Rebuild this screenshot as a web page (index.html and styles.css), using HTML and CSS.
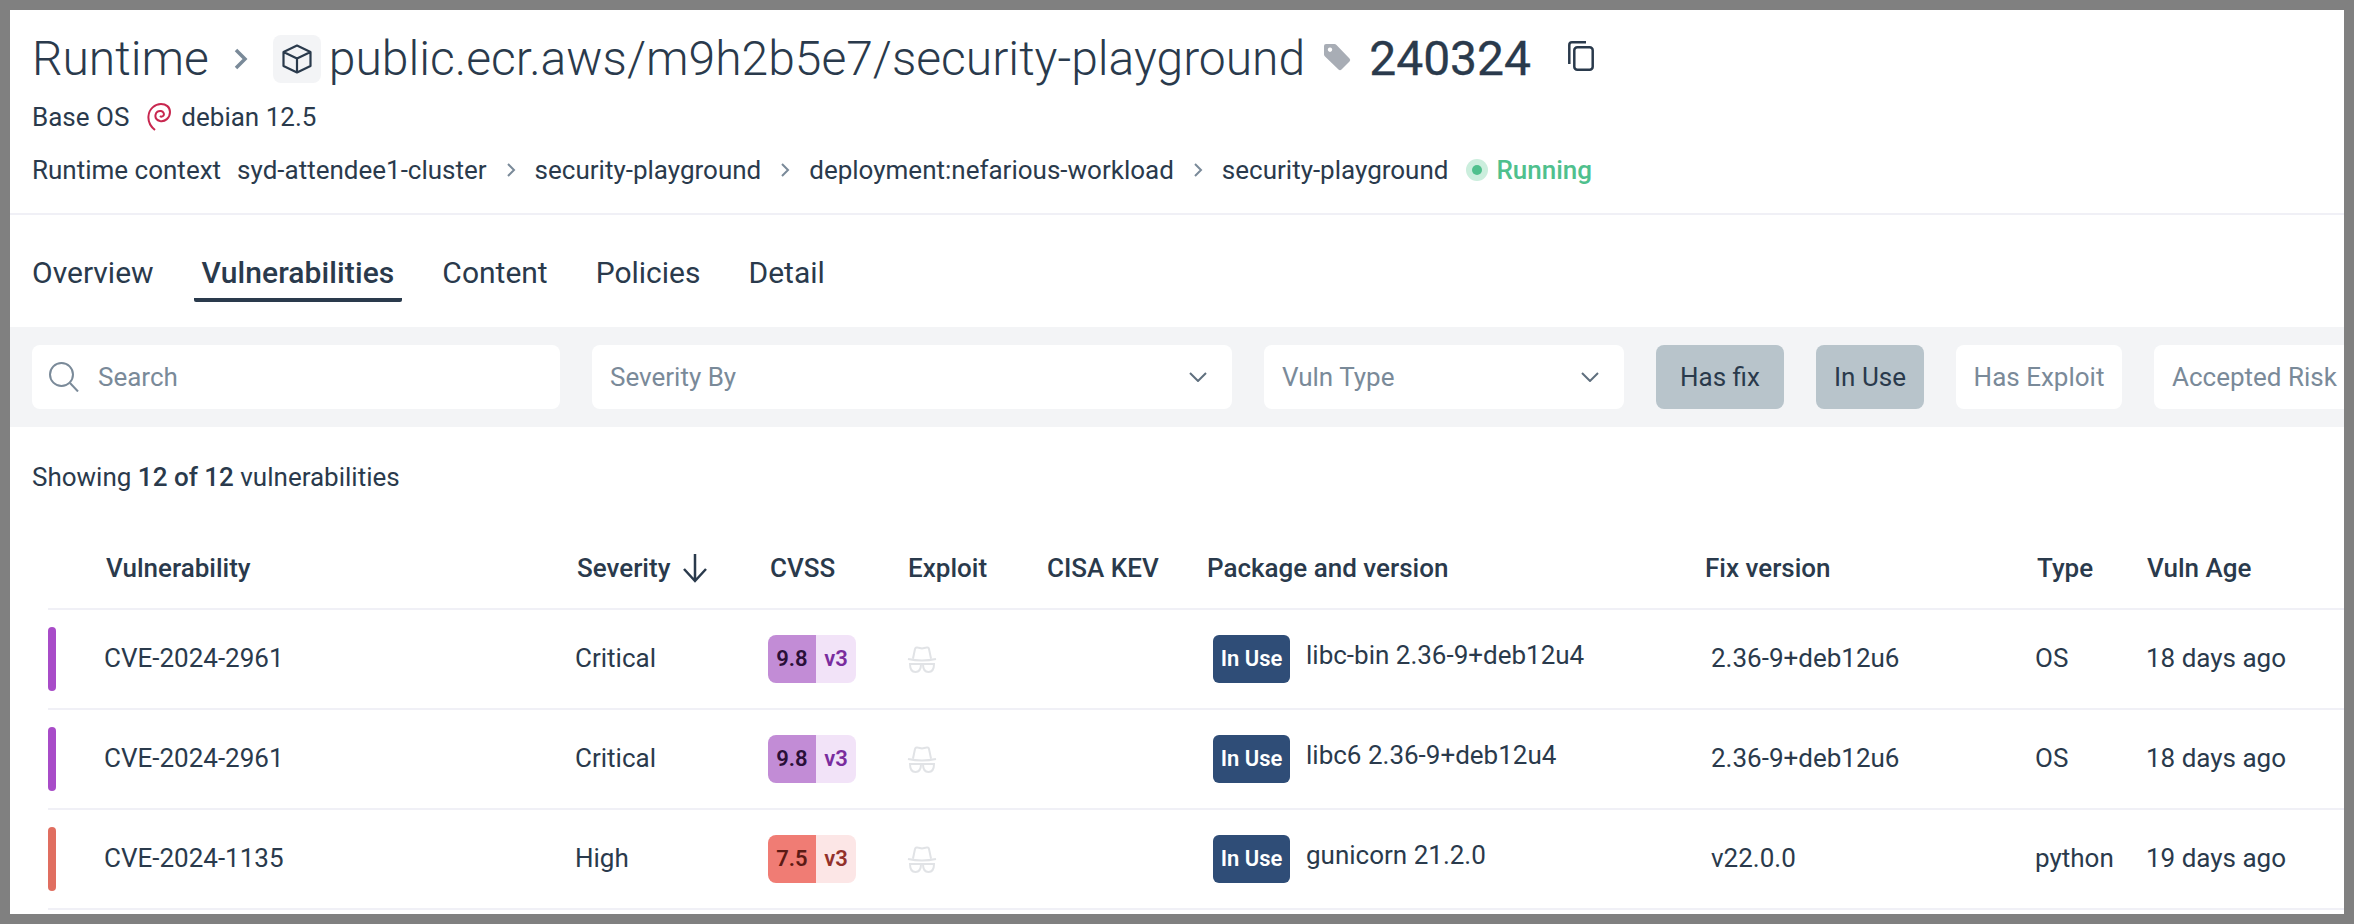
FILE: index.html
```html
<!DOCTYPE html>
<html lang="en">
<head>
<meta charset="utf-8">
<title>Runtime - security-playground</title>
<link rel="stylesheet" href="styles.css">
</head>
<body>
<main class="frame">
  <header class="head">
    <div class="title-row">
      <span class="title">Runtime</span>
      <svg class="title-chevron" viewBox="0 0 16 24"><path d="M3 3l9 9-9 9"/></svg>
      <span class="cube-box"><svg class="cube" viewBox="0 0 30 30"><path d="M15 1.500L28.500 8v14L15 28.500 1.500 22V8zM1.500 8L15 14.500 28.500 8M15 14.500v14"/></svg></span>
      <span class="title image-name">public.ecr.aws/m9h2b5e7/security-playground</span>
      <svg class="tag" viewBox="0 0 28 28"><path fill-rule="evenodd" d="M3 1h8.500q1 0 2 1l13 13.500q1.500 1.500 0 3l-8 8q-1.500 1.500-3 0L2 13.500q-1-1-1-2V3q0-2 2-2zM7 4.500a2.200 2.200 0 1 0 .01 0z"/></svg>
      <span class="tag-name">240324</span>
      <svg class="copy" viewBox="0 0 26 30"><path d="M1.300 23V4q0-2.700 2.700-2.700h14"/><rect x="6.300" y="6.300" width="18.400" height="22.400" rx="3"/></svg>
    </div>
    <div class="os-row">
      <span>Base OS</span>
      <svg class="debian" viewBox="0 0 24 28"><path d="M8 27C3 23 1 18 1.500 13 2 6 8 1 14 1c5 0 9 3 9 8 0 6-5 10-10 9-3-.8-5-3-4.500-6 .5-3 3-4.500 5.500-4 2.500.5 3.500 3 2.500 4.500-.8 1.300-2.500 1.500-3.500.5"/></svg>
      <span class="debian-name">debian 12.5</span>
    </div>
    <div class="context-row">
      <span class="context-label">Runtime context</span>
      <span>syd-attendee1-cluster</span>
      <svg class="crumb" viewBox="0 0 10 16"><path d="M2 2l6 6-6 6"/></svg>
      <span>security-playground</span>
      <svg class="crumb" viewBox="0 0 10 16"><path d="M2 2l6 6-6 6"/></svg>
      <span>deployment:nefarious-workload</span>
      <svg class="crumb" viewBox="0 0 10 16"><path d="M2 2l6 6-6 6"/></svg>
      <span>security-playground</span>
      <span class="status"><span class="status-dot"></span>Running</span>
    </div>
  </header>

  <nav class="tabs">
    <a class="tab">Overview</a>
    <a class="tab tab-active">Vulnerabilities</a>
    <a class="tab">Content</a>
    <a class="tab">Policies</a>
    <a class="tab">Detail</a>
  </nav>

  <section class="filters">
    <div class="field field-search">
      <svg class="search-icon" viewBox="0 0 30 30"><circle cx="12.500" cy="12.500" r="11.500"/><path d="M21 21l8 8.500"/></svg>
      <span>Search</span>
    </div>
    <div class="field field-severity"><span>Severity By</span><svg class="select-chevron" viewBox="0 0 18 10"><path d="M1 1l8 8 8-8"/></svg></div>
    <div class="field field-type"><span>Vuln Type</span><svg class="select-chevron" viewBox="0 0 18 10"><path d="M1 1l8 8 8-8"/></svg></div>
    <div class="toggle toggle-on toggle-fix">Has fix</div>
    <div class="toggle toggle-on toggle-use">In Use</div>
    <div class="toggle toggle-exploit">Has Exploit</div>
    <div class="toggle">Accepted Risk</div>
  </section>

  <p class="count">Showing <strong>12 of 12</strong> vulnerabilities</p>

  <section class="table">
    <div class="row row-head">
      <span></span>
      <span class="h h-2">Vulnerability</span>
      <span class="h h-2 sev-head">Severity <svg class="sort" viewBox="0 0 26 30"><path d="M13 1v27M2 16l11 12 11-12"/></svg></span>
      <span class="h h-2">CVSS</span>
      <span class="h h-1">Exploit</span>
      <span class="h">CISA KEV</span>
      <span class="h">Package and version</span>
      <span class="h">Fix version</span>
      <span class="h h-2">Type</span>
      <span class="h h-1">Vuln Age</span>
    </div>

    <div class="row">
      <span class="sev-bar sev-critical"></span>
      <span class="cell">CVE-2024-2961</span>
      <span class="cell">Critical</span>
      <span class="cvss cvss-critical"><b>9.8</b><i>v3</i></span>
      <svg class="hat" viewBox="0 0 30 27"><path d="M6 12.500L8 3q.5-2 2.500-1.500L15 2.500l4.500-1Q21.500 1 22 3l2 9.500M1 13q14 3 28 0M3 18h11c0 5-2 8-5.500 8S3 23 3 18zM16 18h11c0 5-2 8-5.500 8S16 23 16 18zM14 18.500q1-1 2 0"/></svg>
      <span></span>
      <span class="pkg"><span class="in-use">In Use</span><span class="pkg-name">libc-bin 2.36-9+deb12u4</span></span>
      <span class="cell fix">2.36-9+deb12u6</span>
      <span class="cell">OS</span>
      <span class="cell">18 days ago</span>
    </div>

    <div class="row">
      <span class="sev-bar sev-critical"></span>
      <span class="cell">CVE-2024-2961</span>
      <span class="cell">Critical</span>
      <span class="cvss cvss-critical"><b>9.8</b><i>v3</i></span>
      <svg class="hat" viewBox="0 0 30 27"><path d="M6 12.500L8 3q.5-2 2.500-1.500L15 2.500l4.500-1Q21.500 1 22 3l2 9.500M1 13q14 3 28 0M3 18h11c0 5-2 8-5.500 8S3 23 3 18zM16 18h11c0 5-2 8-5.500 8S16 23 16 18zM14 18.500q1-1 2 0"/></svg>
      <span></span>
      <span class="pkg"><span class="in-use">In Use</span><span class="pkg-name">libc6 2.36-9+deb12u4</span></span>
      <span class="cell fix">2.36-9+deb12u6</span>
      <span class="cell">OS</span>
      <span class="cell">18 days ago</span>
    </div>

    <div class="row">
      <span class="sev-bar sev-high"></span>
      <span class="cell">CVE-2024-1135</span>
      <span class="cell">High</span>
      <span class="cvss cvss-high"><b>7.5</b><i>v3</i></span>
      <svg class="hat" viewBox="0 0 30 27"><path d="M6 12.500L8 3q.5-2 2.500-1.500L15 2.500l4.500-1Q21.500 1 22 3l2 9.500M1 13q14 3 28 0M3 18h11c0 5-2 8-5.500 8S3 23 3 18zM16 18h11c0 5-2 8-5.500 8S16 23 16 18zM14 18.500q1-1 2 0"/></svg>
      <span></span>
      <span class="pkg"><span class="in-use">In Use</span><span class="pkg-name">gunicorn 21.2.0</span></span>
      <span class="cell fix">v22.0.0</span>
      <span class="cell">python</span>
      <span class="cell">19 days ago</span>
    </div>
  </section>
</main>
</body>
</html>
```

FILE: styles.css
```css
* { box-sizing: border-box; }

html, body {
  margin: 0;
  height: 100%;
  overflow: hidden;
  background: #808080;
}

body {
  padding: 10px;
  font-family: Roboto, "Liberation Sans", sans-serif;
  font-size: 26px;
  color: #2a3a4c;
}

.frame {
  height: 904px;
  background: #fff;
  overflow: hidden;
}

/* header */
.head {
  height: 205px;
  padding: 25px 22px 0;
  border-bottom: 2px solid #f0f0f6;
}

.title-row {
  display: flex;
  align-items: center;
  height: 48px;
}

.title {
  font-size: 48px;
  font-weight: 300;
  line-height: 48px;
  white-space: nowrap;
}

.title-chevron {
  width: 16px;
  height: 24px;
  margin-left: 24px;
  fill: none;
  stroke: #7a8a99;
  stroke-width: 3.500;
}

.cube-box {
  display: flex;
  align-items: center;
  justify-content: center;
  width: 48px;
  height: 48px;
  margin-left: 24px;
  border-radius: 8px;
  background: #f3f4f6;
}

.cube {
  width: 30px;
  height: 30px;
  fill: none;
  stroke: #2a3a4c;
  stroke-width: 2.200;
  stroke-linejoin: round;
}

.image-name { margin-left: 8px; }

.tag {
  width: 28px;
  height: 28px;
  margin-left: 18px;
  margin-top: -4px;
  fill: #a8adb5;
}

.tag-name {
  margin-left: 18px;
  font-size: 48px;
  line-height: 48px;
  -webkit-text-stroke: 0.3px #2a3a4c;
}

.copy {
  width: 26px;
  height: 30px;
  margin-left: 37px;
  margin-top: -6px;
  fill: none;
  stroke: #2a3a4c;
  stroke-width: 2.500;
}

.os-row {
  display: flex;
  align-items: center;
  gap: 9px;
  height: 30px;
  margin-top: 19px;
}

.debian {
  width: 24px;
  height: 28px;
  margin-left: 9px;
  fill: none;
  stroke: #c8274f;
  stroke-width: 2;
}

.debian-name { margin-left: 1px; }

.context-row {
  display: flex;
  align-items: center;
  height: 30px;
  margin-top: 23px;
  white-space: nowrap;
}

.context-label { margin-right: 16px; }

.crumb {
  width: 10px;
  height: 16px;
  margin: 0 19px;
  fill: none;
  stroke: #7a8a99;
  stroke-width: 2;
}

.status {
  display: flex;
  align-items: center;
  margin-left: 18px;
  color: #4fc08d;
  font-weight: 500;
}

.status-dot {
  width: 10px;
  height: 10px;
  margin: 0 14px 0 6px;
  border-radius: 50%;
  background: #4fc08d;
  box-shadow: 0 0 0 6px #cbeedd;
}

/* tabs */
.tabs {
  display: flex;
  gap: 32px;
  height: 112px;
  padding: 37px 14px 0;
}

.tab {
  height: 50px;
  padding: 0 8px;
  font-size: 30px;
  line-height: 42px;
  border-bottom: 4px solid transparent;
}

.tab-active {
  font-weight: 500;
  letter-spacing: 0.1px;
  border-bottom-color: #2a3a4c;
  border-radius: 0 0 2px 2px;
}

/* filters */
.filters {
  display: flex;
  gap: 32px;
  height: 100px;
  padding: 18px 22px;
  background: #f3f4f6;
  overflow: hidden;
}

.field, .toggle {
  display: flex;
  flex: none;
  align-items: center;
  height: 64px;
  border-radius: 8px;
  background: #fff;
  color: #7a8a99;
  white-space: nowrap;
}

.field-search { width: 528px; padding-left: 17px; gap: 19px; }
.field-severity { width: 640px; padding: 0 25px 0 18px; justify-content: space-between; }
.field-type { width: 360px; padding: 0 25px 0 18px; justify-content: space-between; }

.search-icon {
  width: 30px;
  height: 30px;
  fill: none;
  stroke: #7a8a99;
  stroke-width: 2;
}

.select-chevron {
  width: 18px;
  height: 10px;
  fill: none;
  stroke: #5f6f7e;
  stroke-width: 2;
}

.toggle { padding: 0 18px; }
.toggle-fix { width: 128px; justify-content: center; padding: 0; }
.toggle-use { width: 108px; justify-content: center; padding: 0; }
.toggle-exploit { width: 166px; justify-content: center; padding: 0; }

.toggle-on {
  background: #b8c4cb;
  color: #2a3a4c;
}

/* count */
.count {
  height: 95px;
  margin: 0;
  padding: 35px 22px 0;
  line-height: 30px;
}

.count strong { font-weight: 500; }

/* table */
.table {
  margin-left: 38px;
}

.row {
  display: grid;
  grid-template-columns: 56px 471px 193px 139px 140px 160px 498px 330px 111px 1fr;
  align-items: center;
  height: 100px;
  border-bottom: 2px solid #f0f0f6;
  white-space: nowrap;
}

.row-head {
  height: 88px;
  padding-top: 6px;
  font-weight: 500;
}

.cell { margin-top: -2px; }

.h-2 { padding-left: 2px; }
.h-1 { padding-left: 1px; }

.sev-head {
  display: flex;
  align-items: center;
  gap: 12px;
}

.sort {
  width: 26px;
  height: 30px;
  fill: none;
  stroke: #2a3a4c;
  stroke-width: 2.500;
}

.sev-bar {
  width: 8px;
  height: 64px;
  border-radius: 4px;
}

.sev-critical { background: #a84cc8; }
.sev-high { background: #e06e60; }

.cvss {
  display: flex;
  width: 88px;
  height: 48px;
  border-radius: 8px;
  overflow: hidden;
  font-size: 22px;
  line-height: 48px;
  text-align: center;
}

.cvss b, .cvss i {
  font-style: normal;
  font-weight: 600;
}

.cvss b { width: 48px; }
.cvss i { width: 40px; }

.cvss-critical b { background: #c28cd6; color: #2a0f38; }
.cvss-critical i { background: #f2e3f8; color: #7a2c9e; }
.cvss-high b { background: #f07c74; color: #5c1a14; }
.cvss-high i { background: #fce6e6; color: #93312a; }

.hat {
  width: 30px;
  height: 27px;
  fill: none;
  stroke: #e1e3e6;
  stroke-width: 2;
}

.pkg {
  display: flex;
  align-items: center;
  padding-left: 6px;
}

.in-use {
  width: 77px;
  height: 48px;
  border-radius: 6px;
  background: #2f4d77;
  color: #fff;
  font-size: 22px;
  font-weight: 600;
  line-height: 48px;
  text-align: center;
}

.pkg-name {
  margin-left: 16px;
  margin-top: -8px;
}

.fix { padding-left: 6px; }
```
